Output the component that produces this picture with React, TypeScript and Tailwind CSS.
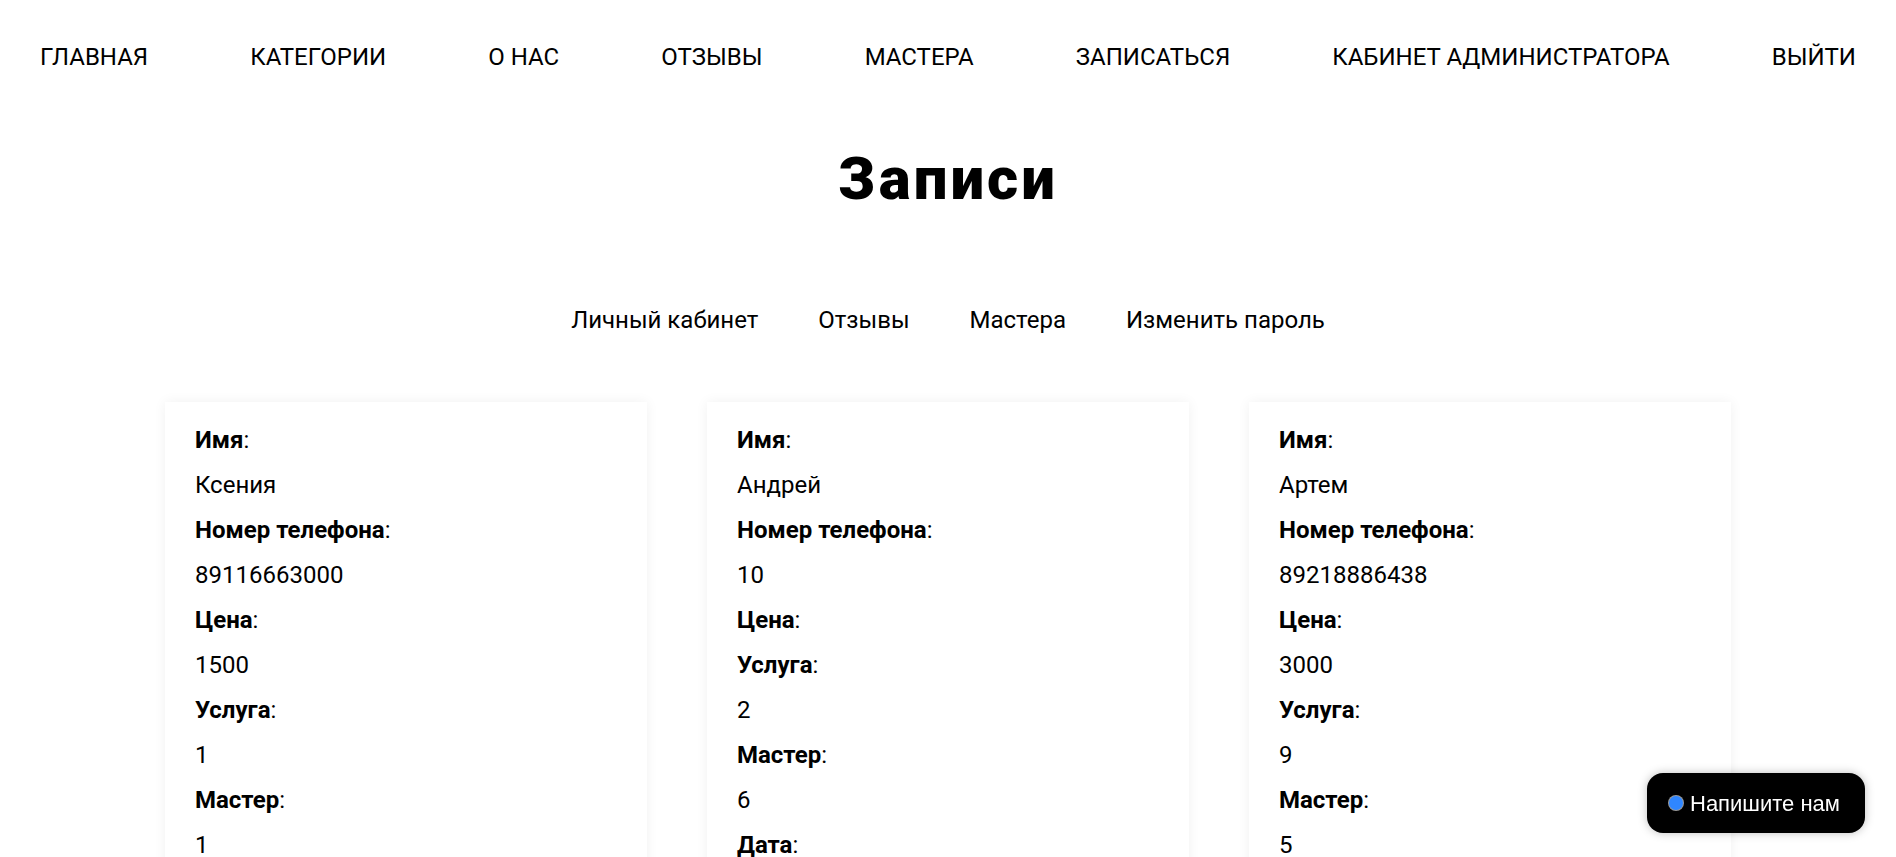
const navItems = [
  "ГЛАВНАЯ",
  "КАТЕГОРИИ",
  "О НАС",
  "ОТЗЫВЫ",
  "МАСТЕРА",
  "ЗАПИСАТЬСЯ",
  "КАБИНЕТ АДМИНИСТРАТОРА",
  "ВЫЙТИ",
];

const subNav = ["Личный кабинет", "Отзывы", "Мастера", "Изменить пароль"];

type Booking = {
  name: string;
  phone: string;
  price: string;
  service: string;
  master: string;
  date: string;
  time: string;
};

const bookings: Booking[] = [
  { name: "Ксения", phone: "89116663000", price: "1500", service: "1", master: "1", date: "2023-05-20", time: "12:00" },
  { name: "Андрей", phone: "10", price: "", service: "2", master: "6", date: "2023-05-21", time: "14:00" },
  { name: "Артем", phone: "89218886438", price: "3000", service: "9", master: "5", date: "2023-05-22", time: "16:00" },
];

function Field({ label, value }: { label: string; value: string }) {
  return (
    <>
      <p>
        <b className="font-bold">{label}</b>:
      </p>
      {value && <p>{value}</p>}
    </>
  );
}

export default function App() {
  return (
    <div className="min-h-screen bg-white text-black font-['Roboto',sans-serif]">
      <nav className="flex justify-between px-10 pt-[43px] text-[24px] leading-[28px]">
        {navItems.map((item) => (
          <a key={item} href="#" className="whitespace-nowrap">
            {item}
          </a>
        ))}
      </nav>

      <h1 className="mt-[78px] text-center text-[60px] leading-[60px] font-black tracking-[0.05em]">
        Записи
      </h1>

      <div className="mt-[97px] flex justify-center gap-[60px] text-[24px] leading-[28px]">
        {subNav.map((item) => (
          <a key={item} href="#">
            {item}
          </a>
        ))}
      </div>

      <div className="mt-[68px] flex justify-center gap-[60px] pb-16">
        {bookings.map((b) => (
          <div
            key={b.name}
            className="w-[482px] bg-white pt-4 pb-6 px-[30px] text-[24px] leading-[45px] shadow-[0_0_12px_rgba(0,0,0,0.06)]"
          >
            <Field label="Имя" value={b.name} />
            <Field label="Номер телефона" value={b.phone} />
            <Field label="Цена" value={b.price} />
            <Field label="Услуга" value={b.service} />
            <Field label="Мастер" value={b.master} />
            <Field label="Дата" value={b.date} />
            <Field label="Время" value={b.time} />
          </div>
        ))}
      </div>

      <button className="fixed right-[31px] bottom-[24px] flex h-[60px] w-[218px] items-center gap-[7px] rounded-[16px] bg-black pl-[22px] text-[22px] text-white font-['Liberation_Sans',sans-serif] shadow-[0_0_10px_rgba(0,0,0,0.25)]">
        <span className="h-[14px] w-[14px] shrink-0 rounded-full bg-[#2f86ff] ring-1 ring-white/60" />
        Напишите нам
      </button>
    </div>
  );
}
